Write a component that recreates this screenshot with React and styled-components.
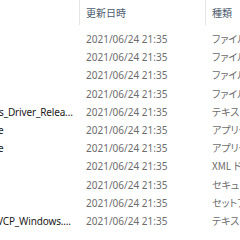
import React from 'react'
import styled, { createGlobalStyle } from 'styled-components'

const Global = createGlobalStyle`
    html, body {
        margin: 0;
        padding: 0;
        background: #ffffff;
    }
    body {
        font-family: 'Noto Sans', 'Noto Sans CJK JP', sans-serif;
        font-size: 10px;
    }
`

const Container = styled.div`
    width: 240px;
    height: 240px;
    overflow: hidden;
    background: #ffffff;
`

const Grid = styled.div`
    display: grid;
    grid-template-columns: 79px 126px 35px;
`

const Head = styled.div`
    height: 25px;
    display: flex;
    align-items: center;
    padding-left: ${p => p.line ? 6 : 0}px;
    padding-bottom: 1px;
    box-sizing: border-box;
    border-left: ${p => p.line ? '1px solid #e5e5e5' : 'none'};
    color: #4d5b6e;
    font-family: 'Noto Sans CJK JP', sans-serif;
    font-size: 10px;
    white-space: nowrap;
    overflow: hidden;
`

const Spacer = styled.div`
    grid-column: 1 / -1;
    height: 5px;
`

const Cell = styled.div`
    height: 18.2px;
    line-height: 18.2px;
    padding-left: ${p => p.pad || 0}px;
    color: ${p => p.dark ? '#1a1a1a' : '#6d6d6d'};
    font-family: ${p => p.jp ? "'Noto Sans CJK JP', sans-serif" : "'Noto Sans', 'Noto Sans CJK JP', sans-serif"};
    font-feature-settings: ${p => p.jp ? '"palt"' : 'normal'};
    font-size: 10px;
    white-space: nowrap;
    overflow: hidden;
`

const Name = styled.span`
    display: inline-block;
    margin-left: ${p => p.shift || 0}px;
    letter-spacing: -0.15px;
`

const rows = [
    { name: '', shift: 0, type: 'ファイル フォルダー' },
    { name: '', shift: 0, type: 'ファイル フォルダー' },
    { name: '', shift: 0, type: 'ファイル フォルダー' },
    { name: '', shift: 0, type: 'ファイル フォルダー' },
    { name: 's_Driver_Relea...', shift: -1, type: 'テキスト ドキュメント' },
    { name: 'e', shift: -2, type: 'アプリケーション' },
    { name: 'e', shift: -2, type: 'アプリケーション' },
    { name: '', shift: 0, type: 'XML ドキュメント' },
    { name: '', shift: 0, type: 'セキュリティ カタログ' },
    { name: '', shift: 0, type: 'セットアップ情報' },
    { name: 'VCP_Windows....', shift: -3, type: 'テキスト ドキュメント' },
]

export default function App() {
    return (
        <Container>
            <Global />
            <Grid>
                <Head></Head>
                <Head line>更新日時</Head>
                <Head line>種類</Head>
                <Spacer />
                {rows.map((r, i) => (
                    <React.Fragment key={i}>
                        <Cell dark>
                            <Name shift={r.shift}>{r.name}</Name>
                        </Cell>
                        <Cell pad={7}>2021/06/24 21:35</Cell>
                        <Cell pad={7} jp>{r.type}</Cell>
                    </React.Fragment>
                ))}
            </Grid>
        </Container>
    )
}
